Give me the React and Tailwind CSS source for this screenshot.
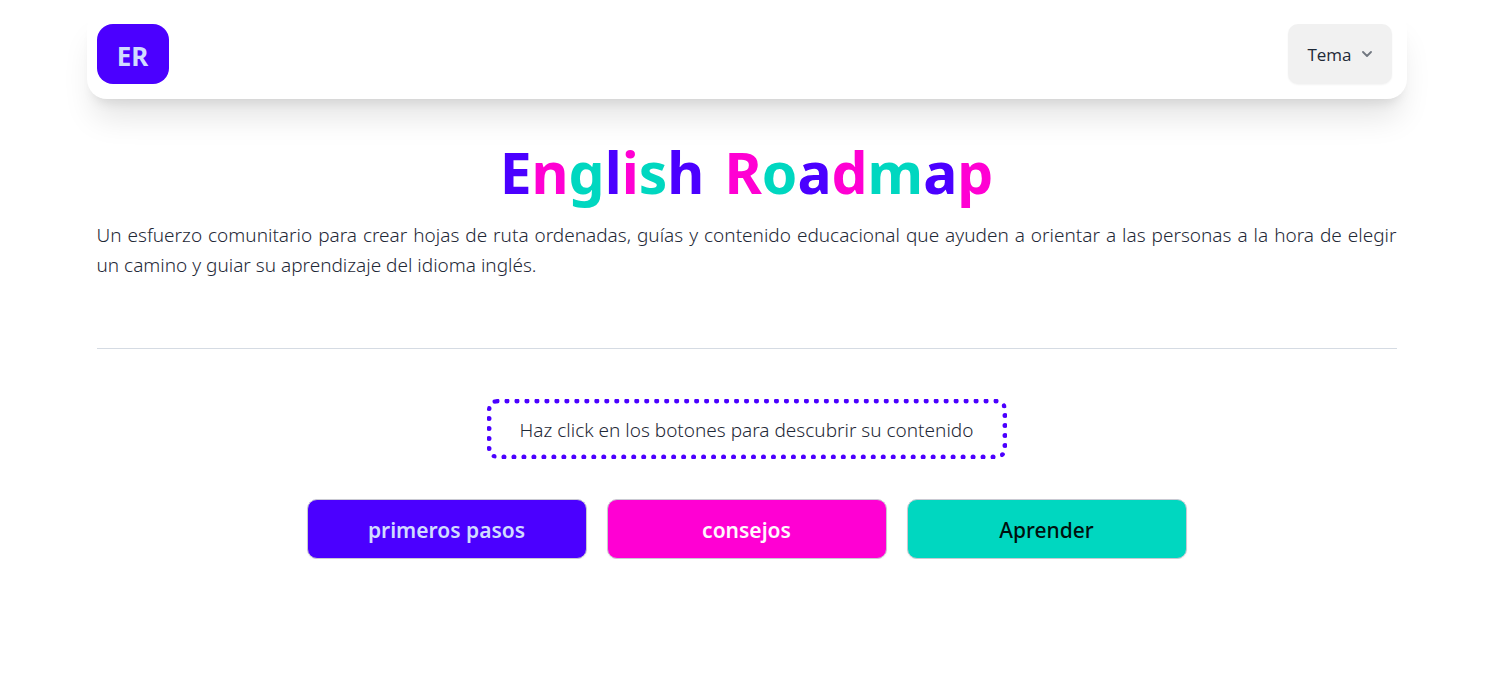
import { useState } from "react";

const TITLE = ["English", "Roadmap"];
const TITLE_COLORS = ["text-[#4b00ff]", "text-[#ff00d3]", "text-[#00d7c0]"];

const SECTIONS = [
  { label: "primeros pasos", style: "bg-[#4b00ff] text-[#d1dbff] font-semibold" },
  { label: "consejos", style: "bg-[#ff00d3] text-[#fff8fd] font-semibold" },
  { label: "Aprender", style: "bg-[#00d7c0] text-[#00110e] font-medium" },
];

function Header() {
  const [open, setOpen] = useState(false);
  return (
    <header className="mt-[9px] flex items-center justify-between rounded-[20px] bg-white py-[15px] pr-[15px] pl-2.5 shadow-[0_25px_31px_-6px_rgba(0,0,0,0.1),0_10px_12px_-7px_rgba(0,0,0,0.1)]">
      <a
        href="#inicio"
        className="flex h-[60px] w-[72px] items-center justify-center rounded-2xl bg-[#4b00ff] pt-1 text-[26px] font-bold text-[#d1dbff]"
      >
        ER
      </a>
      <button
        type="button"
        aria-expanded={open}
        onClick={() => setOpen(!open)}
        className="flex h-[60px] w-[104px] items-center justify-center gap-2.5 rounded-[10px] bg-[#f1f1f1] font-['Open_Sans','Noto_Sans',sans-serif] text-[17px] font-medium text-[#1f2937] shadow-[0_1px_2px_rgba(0,0,0,0.05)]"
      >
        <span className="pt-0.5">Tema</span>
        <svg width="10" height="6" viewBox="0 0 10 6" fill="none" aria-hidden="true">
          <path d="M1 1l4 4 4-4" stroke="#717780" strokeWidth="1.8" strokeLinecap="round" strokeLinejoin="round" />
        </svg>
      </button>
    </header>
  );
}

function Title() {
  let index = 0;
  return (
    <h1 className="mt-[43px] flex justify-center gap-5 text-[57px] leading-[60px] font-bold">
      {TITLE.map((word) => (
        <span key={word}>
          {word.split("").map((letter) => {
            const color = TITLE_COLORS[index % 3];
            index += 1;
            return (
              <span key={index} className={color}>
                {letter}
              </span>
            );
          })}
        </span>
      ))}
    </h1>
  );
}

export default function App() {
  return (
    <div className="mx-auto max-w-[1320px] font-['Noto_Sans','Open_Sans',sans-serif] text-[#1f2937]">
      <Header />
      <main className="px-2.5">
        <Title />
        <p className="mt-[18px] text-justify text-[19px] leading-[30px] font-light">
          Un esfuerzo comunitario para crear hojas de ruta ordenadas, guías y contenido educacional que
          ayuden a orientar a las personas a la hora de elegir un camino y guiar su aprendizaje del idioma
          inglés.
        </p>
        <hr className="mt-[68px] border-[#d5dbe3]" />
        <p className="mx-auto mt-[50px] flex h-[60px] w-[520px] max-w-full items-center justify-center rounded-[10px] border-[5px] border-dotted border-[#4b00ff] pt-0.5 text-[19px] font-light">
          Haz click en los botones para descubrir su contenido
        </p>
        <div className="mt-10 flex flex-wrap justify-center gap-5">
          {SECTIONS.map(({ label, style }) => (
            <button
              key={label}
              type="button"
              className={`h-[60px] w-[280px] rounded-[10px] border border-[#c9c9d2] pt-1 text-[21px] shadow-[0_1px_2px_rgba(0,0,0,0.05)] ${style}`}
            >
              {label}
            </button>
          ))}
        </div>
      </main>
    </div>
  );
}
